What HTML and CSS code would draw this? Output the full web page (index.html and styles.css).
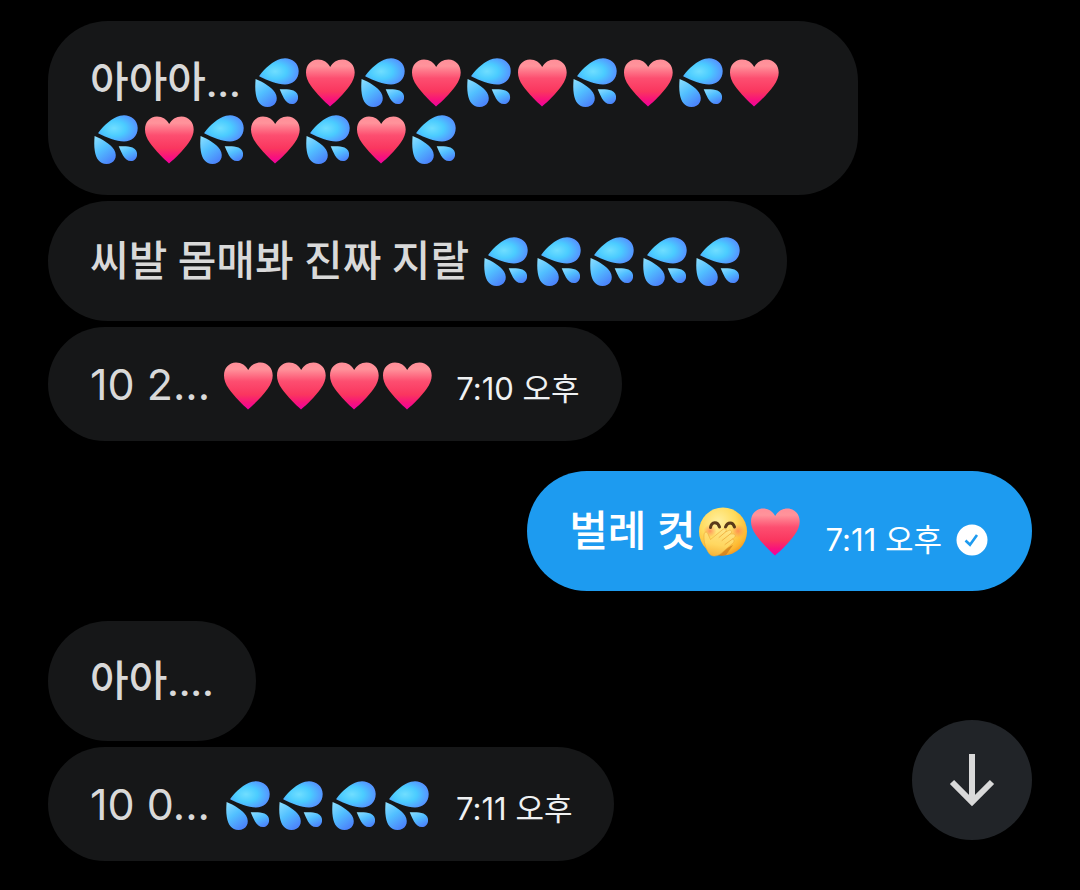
FILE: index.html
```html
<!DOCTYPE html>
<html lang="ko">

<head>
    <meta charset="UTF-8">
    <meta name="viewport" content="width=device-width, initial-scale=1.0">
    <title>쪽지</title>
    <link rel="stylesheet" href="styles.css">
</head>

<body>
    <!-- shared emoji shapes -->
    <svg class="sprites" aria-hidden="true">
        <defs>
            <linearGradient id="heart-fill" x1="0" y1="0" x2="0" y2="1">
                <stop offset="0" stop-color="#ff8e98" />
                <stop offset="0.14" stop-color="#ff939b" />
                <stop offset="0.4" stop-color="#fd4e70" />
                <stop offset="0.68" stop-color="#fa365f" />
                <stop offset="0.85" stop-color="#f8147a" />
                <stop offset="1" stop-color="#f000a0" />
            </linearGradient>
            <radialGradient id="drop-fill" cx="0.4" cy="0.5" r="0.65">
                <stop offset="0" stop-color="#70deff" />
                <stop offset="0.45" stop-color="#4bccff" />
                <stop offset="1" stop-color="#568bff" />
            </radialGradient>
            <linearGradient id="drop-fill-low" x1="0" y1="0" x2="0.6" y2="1">
                <stop offset="0" stop-color="#8fe0ff" />
                <stop offset="0.5" stop-color="#52c0ff" />
                <stop offset="1" stop-color="#4c86fb" />
            </linearGradient>
            <radialGradient id="face-fill" cx="0.4" cy="0.3" r="0.75">
                <stop offset="0" stop-color="#fff0a0" />
                <stop offset="0.5" stop-color="#ffdb5c" />
                <stop offset="0.85" stop-color="#fdb62f" />
                <stop offset="1" stop-color="#ef9220" />
            </radialGradient>
            <radialGradient id="cheek-fill">
                <stop offset="0" stop-color="#ff7b55" stop-opacity="0.75" />
                <stop offset="1" stop-color="#ff8a50" stop-opacity="0" />
            </radialGradient>
            <linearGradient id="hand-fill" x1="0.6" y1="0" x2="0.4" y2="1">
                <stop offset="0" stop-color="#ffe485" />
                <stop offset="0.6" stop-color="#ffd760" />
                <stop offset="1" stop-color="#f8b53a" />
            </linearGradient>
        </defs>
        <symbol id="heart" viewBox="0 0 53 53">
            <path fill="url(#heart-fill)" d="M26 50.500C21 46 12 37 7 30C3.500 25 2 21 2 16.500C2 9 7 3.500 14 3.500C19.500 3.500 24 6.500 26.200 11C28.500 6.500 33 3.500 38.500 3.500C45.500 3.500 50.700 9 50.700 16.500C50.700 21 49 25 45.500 30C40.500 37 31.500 46 26 50.500Z" />
        </symbol>
        <symbol id="sweat" viewBox="0 0 53 53">
            <path fill="url(#drop-fill)" d="M8.500 19.500C14 12 22 5 30 2.700C38.500 0.500 47.700 5.500 47.700 15C47.700 23.500 41.500 28.500 34 28.500C26 28.500 17 24.500 8.500 20.500Q8 20 8.500 19.500Z" />
            <path fill="url(#drop-fill-low)" d="M4.600 23C12 26 20 30.500 24 36.500C28.500 44 24 51 16.500 51C9.500 51 6 45.500 4.800 38C4 33 4.200 28 4.600 23Z" />
            <path fill="url(#drop-fill-low)" d="M28.700 33.300C33.500 33.200 39 33 42.500 34.500C46 36 47.500 39 47 42.500C46.500 46 44 48 41 48C37.500 48 35 46 33 42.500C31.500 39.500 30 36.500 28.700 33.300Z" />
        </symbol>
        <symbol id="giggle" viewBox="0 0 53 53">
            <circle cx="27" cy="26.500" r="24" fill="url(#face-fill)" />
            <circle cx="14" cy="26" r="6.500" fill="url(#cheek-fill)" />
            <circle cx="42" cy="26" r="7" fill="url(#cheek-fill)" />
            <path fill="none" stroke="#5a3a1a" stroke-width="3" stroke-linecap="round" d="M14.500 22.500C15.500 16.500 21.500 16 23.500 22M29.500 22C31.500 16.500 37 16.500 38.500 22" />
            <path fill="#c9771c" d="M21 50L27 45L37 40L30 50Q25 52 21 50Z" opacity="0.7" />
            <path fill="url(#hand-fill)" stroke="#eda938" stroke-width="0.600" stroke-linejoin="round" d="M13.500 49C9.500 44 7.500 36 8 30C8.200 26.500 11 26 12 29L14.500 34.500L27 24.300C29.500 22.500 31.500 25 29.500 27L32.500 25.500C35 24 37 27 34.500 28.800L37 29C39.500 29 40 31.500 37.800 33L36.500 34C38.500 34.500 38.500 37 36.500 38.500L25 48.500C21 51.500 16.500 52 13.500 49Z" />
            <path fill="none" stroke="#eda938" stroke-width="0.800" stroke-linecap="round" d="M29.500 27L23 32.500M34.500 28.800L26 35.500M36.500 34L29 39.500" />
        </symbol>
    </svg>

    <main class="chat">
        <div class="group">
            <p class="bubble long">아아아... <svg class="emoji" role="img" aria-label="💦"><use href="#sweat" /></svg><svg class="emoji" role="img" aria-label="❤"><use href="#heart" /></svg><svg class="emoji" role="img" aria-label="💦"><use href="#sweat" /></svg><svg class="emoji" role="img" aria-label="❤"><use href="#heart" /></svg><svg class="emoji" role="img" aria-label="💦"><use href="#sweat" /></svg><svg class="emoji" role="img" aria-label="❤"><use href="#heart" /></svg><svg class="emoji" role="img" aria-label="💦"><use href="#sweat" /></svg><svg class="emoji" role="img" aria-label="❤"><use href="#heart" /></svg><svg class="emoji" role="img" aria-label="💦"><use href="#sweat" /></svg><svg class="emoji" role="img" aria-label="❤"><use href="#heart" /></svg><svg class="emoji" role="img" aria-label="💦"><use href="#sweat" /></svg><svg class="emoji" role="img" aria-label="❤"><use href="#heart" /></svg><svg class="emoji" role="img" aria-label="💦"><use href="#sweat" /></svg><svg class="emoji" role="img" aria-label="❤"><use href="#heart" /></svg><svg class="emoji" role="img" aria-label="💦"><use href="#sweat" /></svg><svg class="emoji" role="img" aria-label="❤"><use href="#heart" /></svg><svg class="emoji" role="img" aria-label="💦"><use href="#sweat" /></svg></p>
            <p class="bubble">씨발 몸매봐 진짜 지랄 <svg class="emoji" role="img" aria-label="💦"><use href="#sweat" /></svg><svg class="emoji" role="img" aria-label="💦"><use href="#sweat" /></svg><svg class="emoji" role="img" aria-label="💦"><use href="#sweat" /></svg><svg class="emoji" role="img" aria-label="💦"><use href="#sweat" /></svg><svg class="emoji" role="img" aria-label="💦"><use href="#sweat" /></svg></p>
            <div class="bubble latin">
                <p>10 2... <svg class="emoji" role="img" aria-label="❤"><use href="#heart" /></svg><svg class="emoji" role="img" aria-label="❤"><use href="#heart" /></svg><svg class="emoji" role="img" aria-label="❤"><use href="#heart" /></svg><svg class="emoji" role="img" aria-label="❤"><use href="#heart" /></svg></p>
                <time>7:10 오후</time>
            </div>
        </div>

        <div class="group sent">
            <div class="bubble">
                <p>벌레 컷<svg class="emoji" role="img" aria-label="🤭"><use href="#giggle" /></svg><svg class="emoji" role="img" aria-label="❤"><use href="#heart" /></svg></p>
                <time>7:11 오후</time>
                <svg class="check" viewBox="0 0 32 32" role="img" aria-label="전송됨">
                    <circle cx="16" cy="16" r="15.500" fill="#fff" />
                    <path fill="none" stroke="#1d9bf0" stroke-width="2.600" d="M9.500 16.500L14 20.800L21 11" />
                </svg>
            </div>
        </div>

        <div class="group">
            <p class="bubble">아아....</p>
            <div class="bubble latin">
                <p>10 0... <svg class="emoji" role="img" aria-label="💦"><use href="#sweat" /></svg><svg class="emoji" role="img" aria-label="💦"><use href="#sweat" /></svg><svg class="emoji" role="img" aria-label="💦"><use href="#sweat" /></svg><svg class="emoji" role="img" aria-label="💦"><use href="#sweat" /></svg></p>
                <time>7:11 오후</time>
            </div>
        </div>
    </main>

    <button class="scroll-down" type="button" aria-label="맨 아래로">
        <svg viewBox="0 0 48 56" aria-hidden="true">
            <path fill="none" stroke="#d9d9d9" stroke-width="6" d="M24 2V50M4 30L24 50L44 30" />
        </svg>
    </button>
</body>

</html>
```
FILE: styles.css
```css
* {
    margin: 0;
    padding: 0;
    box-sizing: border-box;
}

body {
    font-family: Roboto, "Noto Sans CJK KR", sans-serif;
    font-size: 42px;
    font-weight: 500;
    background-color: #000;
    color: #d9d9d9;
}

.sprites {
    position: absolute;
    width: 0;
    height: 0;
}

.chat {
    display: flex;
    flex-direction: column;
    gap: 30px;
    padding: 21px 48px 29px;
}

.group {
    display: flex;
    flex-direction: column;
    align-items: flex-start;
    gap: 6px;
}

.sent {
    align-items: flex-end;
}

.bubble {
    max-width: 75vw;
    padding: 31px 42px 29px;
    border-radius: 60px;
    background-color: #161718;
    line-height: 60px;
}

div.bubble {
    display: flex;
    align-items: flex-end;
    gap: 22px;
}

.long {
    padding: 33px 42px 27px;
    line-height: 57px;
}

.latin {
    padding: 30px 42px;
    font-family: Inter, "Noto Sans CJK KR", sans-serif;
    font-size: 43px;
    font-weight: 400;
    line-height: 54px;
}

.sent .bubble {
    background-color: #1d9bf0;
    color: #fff;
    gap: 14px;
}

.sent time {
    margin-left: 10px;
    color: #fff;
}

.emoji {
    width: 53px;
    height: 53px;
    vertical-align: middle;
    margin: -9px 0 -3px;
}

time {
    font-family: Inter, "Noto Sans CJK KR", sans-serif;
    font-size: 31px;
    font-weight: 400;
    line-height: 44px;
    color: #eff1f2;
    white-space: nowrap;
}

.check {
    width: 32px;
    height: 32px;
    margin: 0 2px 6px 0;
}

.scroll-down {
    position: fixed;
    right: 48px;
    bottom: 50px;
    display: flex;
    justify-content: center;
    align-items: center;
    width: 120px;
    height: 120px;
    border: none;
    border-radius: 50%;
    background-color: #212428;
    cursor: pointer;
}

.scroll-down svg {
    width: 48px;
    height: 56px;
}
```
